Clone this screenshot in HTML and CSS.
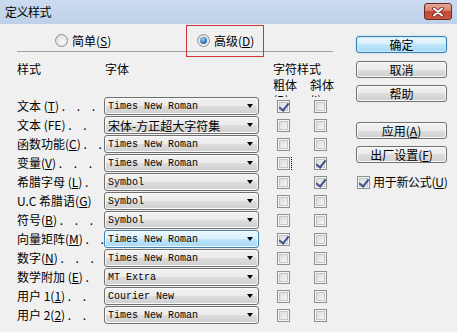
FILE: index.html
```html
<!DOCTYPE html>
<html lang="zh-CN">
<head>
  <meta charset="UTF-8" />
  <title>定义样式</title>
  <link rel="stylesheet" href="styles.css">
</head>
<body>
<div class="window">
  <div class="titlebar">
    <span class="title">定义样式</span>
    <span class="close">
      <svg width="12" height="10" viewBox="0 0 12 10">
        <path d="M2 1.5 L10 8.5 M10 1.5 L2 8.5" stroke="#5a1a14" stroke-width="3.4" stroke-linecap="round"/>
        <path d="M2 1.5 L10 8.5 M10 1.5 L2 8.5" stroke="#fff" stroke-width="2" stroke-linecap="round"/>
      </svg>
    </span>
  </div>

  <div class="content">
    <div class="main">
      <div class="mode">
        <span class="radio first"><span class="radio-dot"></span><span>简单(<u>S</u>)</span></span>
        <span class="radio"><span class="radio-dot on"></span><span>高级(<u>D</u>)</span></span>
      </div>
      <div class="divider"></div>

      <div class="head">
        <div class="head-row">
          <span class="h-style">样式</span>
          <span class="h-font">字体</span>
          <span>字符样式</span>
        </div>
        <div class="head-row sub">
          <span class="h-bold">粗体<br>(<u>B</u>)</span>
          <span class="h-italic">斜体<br>(<u>I</u>)</span>
        </div>
      </div>

      <div class="row">
        <span class="label">文本 (<u>T</u>) <span class="dots">. . .</span></span>
        <span class="combo"><span class="val">Times New Roman</span><span class="arrow"></span></span>
        <span class="cell"><span class="check on"></span></span>
        <span class="cell"><span class="check"></span></span>
      </div>
      <div class="row">
        <span class="label">文本 (FE) <span class="dots">. .</span></span>
        <span class="combo"><span class="val cjk">宋体-方正超大字符集</span><span class="arrow"></span></span>
        <span class="cell"><span class="check"></span></span>
        <span class="cell"><span class="check"></span></span>
      </div>
      <div class="row">
        <span class="label">函数功能(<u>C</u>) <span class="dots">. .</span></span>
        <span class="combo"><span class="val">Times New Roman</span><span class="arrow"></span></span>
        <span class="cell"><span class="check"></span></span>
        <span class="cell"><span class="check"></span></span>
      </div>
      <div class="row">
        <span class="label">变量(<u>V</u>) <span class="dots">. . .</span></span>
        <span class="combo"><span class="val">Times New Roman</span><span class="arrow"></span></span>
        <span class="cell"><span class="check focus"></span></span>
        <span class="cell"><span class="check on"></span></span>
      </div>
      <div class="row">
        <span class="label">希腊字母 (<u>L</u>) <span class="dots">.</span></span>
        <span class="combo"><span class="val">Symbol</span><span class="arrow"></span></span>
        <span class="cell"><span class="check"></span></span>
        <span class="cell"><span class="check on"></span></span>
      </div>
      <div class="row">
        <span class="label">U.C 希腊语(<u>G</u>)</span>
        <span class="combo"><span class="val">Symbol</span><span class="arrow"></span></span>
        <span class="cell"><span class="check"></span></span>
        <span class="cell"><span class="check"></span></span>
      </div>
      <div class="row">
        <span class="label">符号(<u>B</u>) <span class="dots">. . .</span></span>
        <span class="combo"><span class="val">Symbol</span><span class="arrow"></span></span>
        <span class="cell"><span class="check"></span></span>
        <span class="cell"><span class="check"></span></span>
      </div>
      <div class="row">
        <span class="label">向量矩阵(<u>M</u>) <span class="dots">. .</span></span>
        <span class="combo active"><span class="val">Times New Roman</span><span class="arrow"></span></span>
        <span class="cell"><span class="check on"></span></span>
        <span class="cell"><span class="check"></span></span>
      </div>
      <div class="row">
        <span class="label">数字(<u>N</u>) <span class="dots">. . .</span></span>
        <span class="combo"><span class="val">Times New Roman</span><span class="arrow"></span></span>
        <span class="cell"><span class="check"></span></span>
        <span class="cell"><span class="check"></span></span>
      </div>
      <div class="row">
        <span class="label">数学附加 (<u>E</u>) <span class="dots">.</span></span>
        <span class="combo"><span class="val">MT Extra</span><span class="arrow"></span></span>
        <span class="cell"><span class="check"></span></span>
        <span class="cell"><span class="check"></span></span>
      </div>
      <div class="row">
        <span class="label">用户 1(<u>1</u>) <span class="dots">. .</span></span>
        <span class="combo"><span class="val">Courier New</span><span class="arrow"></span></span>
        <span class="cell"><span class="check"></span></span>
        <span class="cell"><span class="check"></span></span>
      </div>
      <div class="row">
        <span class="label">用户 2(<u>2</u>) <span class="dots">. .</span></span>
        <span class="combo"><span class="val">Times New Roman</span><span class="arrow"></span></span>
        <span class="cell"><span class="check"></span></span>
        <span class="cell"><span class="check"></span></span>
      </div>
    </div>

    <div class="side">
      <span class="btn default">确定</span>
      <span class="btn">取消</span>
      <span class="btn">帮助</span>
      <span class="btn gap"><span>应用(<u>A</u>)</span></span>
      <span class="btn"><span>出厂设置(<u>F</u>)</span></span>
      <span class="side-check"><span class="check on"></span><span>用于新公式(<u>U</u>)</span></span>
    </div>
  </div>

  <!-- annotation around the selected mode -->
  <div class="mark"></div>
</div>
</body>
</html>
```

FILE: styles.css
```css
* {
  box-sizing: border-box;
}
body {
  margin: 0;
  background-color: #f0f0f0;
  font-family: "Noto Sans CJK SC", "Liberation Sans", sans-serif;
  font-size: 12px;
  color: #000;
}
u {
  text-decoration-thickness: 1px;
  text-underline-offset: 1px;
}
.window {
  position: relative;
  width: 457px;
  height: 332px;
  overflow: hidden;
}

/* title bar */
.titlebar {
  height: 24px;
  display: flex;
  justify-content: space-between;
  padding: 0 5px 0 5px;
  background: linear-gradient(#cbdbef, #bfd1e8);
}
.title {
  line-height: 24px;
  letter-spacing: -0.5px;
}
.close {
  margin-top: 3px;
  width: 28px;
  height: 17px;
  display: flex;
  align-items: center;
  justify-content: center;
  border: 1px solid #6d2a22;
  border-radius: 3px;
  background: linear-gradient(#e3a897 0%, #d5806c 45%, #c04a35 50%, #c8563f 100%);
}

/* body */
.content {
  display: flex;
}
.main {
  width: 356px;
  padding-left: 17px;
}
.mode {
  height: 27px;
  display: flex;
  padding-top: 10px;
}
.radio {
  display: flex;
  align-items: center;
  height: 13px;
  line-height: 13px;
  gap: 4px;
  white-space: nowrap;
}
.radio.first {
  margin-left: 38px;
  width: 142px;
}
.radio-dot {
  position: relative;
  width: 13px;
  height: 13px;
  border-radius: 50%;
  border: 1px solid #8e8f8f;
  background: radial-gradient(circle at 60% 65%, #fbfbfb, #d4d4d4);
}
.radio-dot.on::after {
  content: "";
  position: absolute;
  left: 2px;
  top: 2px;
  width: 7px;
  height: 7px;
  border-radius: 50%;
  background: radial-gradient(circle at 40% 35%, #9fd4f4, #2a74b8 60%, #184f86);
}
.divider {
  width: 316px;
  height: 1px;
  background-color: #a0a0a0;
}

/* column headers */
.head {
  padding-top: 9px;
}
.head-row {
  display: flex;
  height: 16px;
  line-height: 16px;
}
.head-row.sub {
  height: 20px;
  line-height: 15px;
  overflow: hidden;
}
.h-style {
  width: 88px;
}
.h-font {
  width: 168px;
}
.h-bold {
  margin-left: 256px;
  width: 37px;
}
.h-italic {
  width: 37px;
}

/* style rows */
.row {
  display: flex;
  align-items: center;
  height: 18px;
  margin-bottom: 1px;
}
.label {
  width: 87px;
  white-space: pre;
  overflow: hidden;
  line-height: 18px;
}
.dots {
  letter-spacing: 4.5px;
}
.combo {
  width: 155px;
  height: 18px;
  margin-right: 14px;
  display: flex;
  align-items: center;
  justify-content: space-between;
  padding: 0 5px 0 3px;
  border: 1px solid #707070;
  border-radius: 3px;
  background: linear-gradient(#f2f2f2 0%, #ebebeb 50%, #dddddd 50%, #cfcfcf 100%);
  box-shadow: inset 0 0 0 1px #fafafa;
  font-family: "Liberation Mono", "Noto Sans CJK SC", monospace;
  font-size: 10px;
}
.combo.active {
  border-color: #3c7fb1;
  background: linear-gradient(#eaf6fd 0%, #d9f0fc 50%, #bee6fd 50%, #a7d9f5 100%);
}
.val.cjk {
  font-family: "Noto Sans CJK SC", sans-serif;
  font-size: 12px;
}
.arrow {
  width: 0;
  height: 0;
  border-left: 3.5px solid transparent;
  border-right: 3.5px solid transparent;
  border-top: 4px solid #000;
}
.cell {
  width: 37px;
  padding-left: 4px;
  display: flex;
}
.check {
  position: relative;
  flex: none;
  width: 13px;
  height: 13px;
  border: 1px solid #8e8f8f;
  background: linear-gradient(135deg, #d6d6d6, #fbfbfb);
  box-shadow: inset 0 0 0 1px #f4f4f4, inset 0 0 0 2px #c6c6c6;
}
.check.on::after {
  content: "";
  position: absolute;
  left: 3px;
  top: 0px;
  width: 4px;
  height: 8px;
  border-right: 2px solid #3e4f8f;
  border-bottom: 2px solid #3e4f8f;
  transform: rotate(38deg);
}
.check.focus::before {
  content: "";
  position: absolute;
  right: -3px;
  top: -1px;
  height: 13px;
  border-right: 1px dotted #000;
}

/* buttons on the right */
.side {
  width: 91px;
  padding-top: 12px;
  display: flex;
  flex-direction: column;
}
.btn {
  height: 17px;
  margin-bottom: 7px;
  display: flex;
  align-items: center;
  justify-content: center;
  border: 1px solid #707070;
  border-radius: 3px;
  background: linear-gradient(#f2f2f2 0%, #ebebeb 50%, #dddddd 50%, #cfcfcf 100%);
  box-shadow: inset 0 0 0 1px #fbfbfb;
  line-height: 15px;
}
.btn.default {
  margin-bottom: 8px;
  border-color: #3c7fb1;
  background: linear-gradient(#eaf6fd 0%, #d9f0fc 50%, #bee6fd 50%, #a7d9f5 100%);
  box-shadow: inset 0 0 0 1px #c6e9fc, 0 0 2px #8fd0f5;
}
.btn.gap {
  margin-top: 13px;
}
.side-check {
  margin-top: 5px;
  margin-left: 1px;
  display: flex;
  align-items: center;
  gap: 3px;
  line-height: 14px;
  white-space: nowrap;
  letter-spacing: -0.3px;
}

.mark {
  position: absolute;
  left: 186px;
  top: 25px;
  width: 78px;
  height: 32px;
  border: 1px solid #d0343a;
}
```
